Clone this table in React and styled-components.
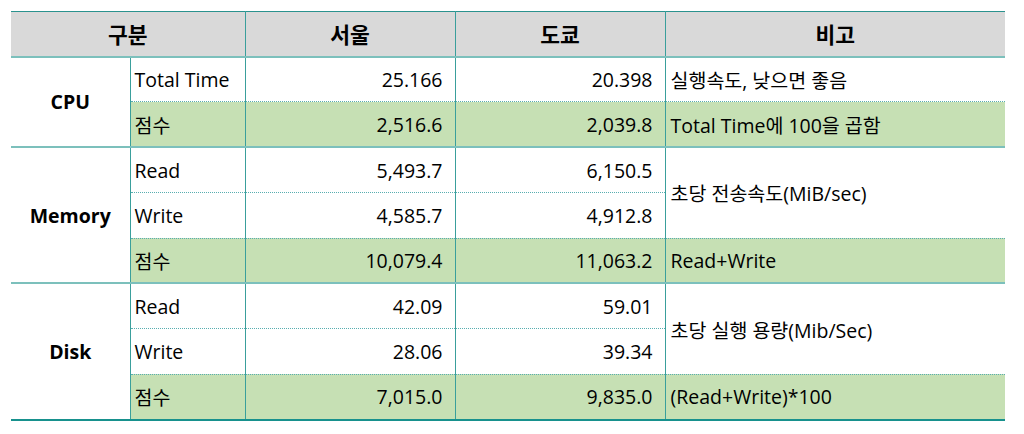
import React from "react";
import styled, { createGlobalStyle } from "styled-components";

const GlobalStyle = createGlobalStyle`
  body {
    margin: 0;
    background: #ffffff;
    font-family: "Open Sans", "Noto Sans CJK KR", sans-serif;
    color: #000000;
  }
`;

const Page = styled.div`
  padding: 11px 0 0 11px;
`;

const Table = styled.table`
  width: 994px;
  border-collapse: collapse;
  table-layout: fixed;
  font-size: 19.5px;
`;

const HeadRow = styled.tr`
  height: 45px;
  background: #d9d9d9;
  border-top: 1px solid #2a928e;
  border-bottom: 2px solid #7cc0bc;
`;

const HeadCell = styled.th`
  font-size: 21.5px;
  font-weight: 700;
  text-align: center;
  padding: 0;
  border-left: ${(p) => (p.$first ? "none" : "1px solid #3a9f9c")};
`;

const Row = styled.tr`
  height: 45.4px;
  ${(p) => (p.$score ? "& > td { background: #c6e0b4; }" : "")}
  & > td {
    border-top: ${(p) =>
      p.$start ? "2px solid #7cc0bc" : "1px dotted #58aeb0"};
  }
  ${(p) => (p.$last ? "border-bottom: 2px solid #17918d;" : "")}
`;

const Cell = styled.td`
  padding: 0;
  border-left: 1px solid #3a9f9c;
  white-space: nowrap;
`;

const GroupCell = styled(Cell)`
  && {
    background: #ffffff;
    border-top: 2px solid #7cc0bc;
  }
  border-left: none;
  text-align: center;
  font-weight: 700;
`;

const LabelCell = styled(Cell)`
  padding-left: 4px;
`;

const NumCell = styled(Cell)`
  text-align: right;
  padding-right: 12px;
`;

const NoteCell = styled(Cell)`
  padding-left: 5px;
`;

const groups = [
  {
    name: "CPU",
    rows: [
      { label: "Total Time", seoul: "25.166", tokyo: "20.398", note: "실행속도, 낮으면 좋음" },
      { label: "점수", seoul: "2,516.6", tokyo: "2,039.8", note: "Total Time에 100을 곱함", score: true },
    ],
  },
  {
    name: "Memory",
    rows: [
      { label: "Read", seoul: "5,493.7", tokyo: "6,150.5", note: "초당 전송속도(MiB/sec)", span: 2 },
      { label: "Write", seoul: "4,585.7", tokyo: "4,912.8", skipNote: true },
      { label: "점수", seoul: "10,079.4", tokyo: "11,063.2", note: "Read+Write", score: true },
    ],
  },
  {
    name: "Disk",
    rows: [
      { label: "Read", seoul: "42.09", tokyo: "59.01", note: "초당 실행 용량(Mib/Sec)", span: 2 },
      { label: "Write", seoul: "28.06", tokyo: "39.34", skipNote: true },
      { label: "점수", seoul: "7,015.0", tokyo: "9,835.0", note: "(Read+Write)*100", score: true },
    ],
  },
];

const App = () => {
  return (
    <Page>
      <GlobalStyle />
      <Table>
        <colgroup>
          <col style={{ width: 119 }} />
          <col style={{ width: 115 }} />
          <col style={{ width: 210 }} />
          <col style={{ width: 210 }} />
          <col style={{ width: 340 }} />
        </colgroup>
        <thead>
          <HeadRow>
            <HeadCell colSpan={2} $first>구분</HeadCell>
            <HeadCell>서울</HeadCell>
            <HeadCell>도쿄</HeadCell>
            <HeadCell>비고</HeadCell>
          </HeadRow>
        </thead>
        <tbody>
          {groups.map((g, gi) =>
            g.rows.map((r, ri) => (
              <Row
                key={g.name + ri}
                $start={ri === 0}
                $score={r.score}
                $last={gi === groups.length - 1 && ri === g.rows.length - 1}
              >
                {ri === 0 && <GroupCell rowSpan={g.rows.length}>{g.name}</GroupCell>}
                <LabelCell>{r.label}</LabelCell>
                <NumCell>{r.seoul}</NumCell>
                <NumCell>{r.tokyo}</NumCell>
                {!r.skipNote && <NoteCell rowSpan={r.span || 1}>{r.note}</NoteCell>}
              </Row>
            ))
          )}
        </tbody>
      </Table>
    </Page>
  );
};

export default App;
